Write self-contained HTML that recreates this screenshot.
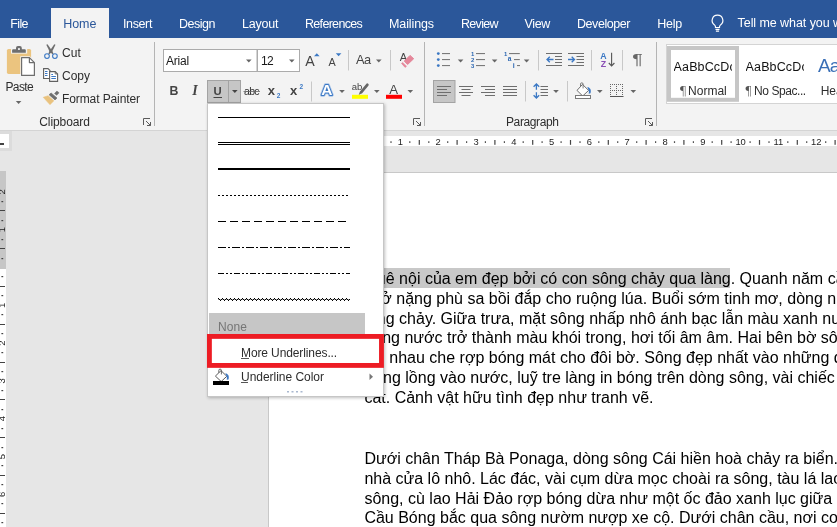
<!DOCTYPE html>
<html><head><meta charset="utf-8"><title>Word</title>
<style>
*{box-sizing:border-box;margin:0;padding:0}
html,body{width:837px;height:527px;overflow:hidden;background:#e6e6e6;font-family:"Liberation Sans",sans-serif;}
#app{position:relative;width:837px;height:527px;overflow:hidden;background:#e6e6e6;will-change:transform}
.abs{position:absolute}
svg{position:absolute;overflow:visible}
#tabbar{position:absolute;left:0;top:0;width:837px;height:38px;background:#2b579a}
#hometab{position:absolute;left:51px;top:8px;width:58px;height:30px;background:#f3f3f3}
#ribbon{position:absolute;left:0;top:38px;width:837px;height:93px;background:#f3f3f3;border-bottom:1px solid #d4d4d4}
.t{position:absolute;white-space:nowrap;line-height:16px;font-family:"Liberation Sans",sans-serif}
.vsep{position:absolute;width:1px;background:#c8c8c8}
.gsep{position:absolute;width:1px;background:#b4b4b4;top:42px;height:84px}
.dd{position:absolute;width:0;height:0;border-left:3px solid transparent;border-right:3px solid transparent;border-top:3px solid #555}
.doc{position:absolute;left:364.4px;font-size:16px;line-height:19.87px;color:#000;white-space:nowrap;font-family:"Liberation Sans",sans-serif}
.box{position:absolute;background:#fff;border:1px solid #ababab}
</style></head><body><div id="app">

<!-- TAB BAR -->
<div id="tabbar"><div id="hometab"></div>
<svg style="left:710px;top:14px" width="15" height="19" viewBox="0 0 15 19" fill="none" stroke="#fff" stroke-width="1.2"><path d="M7.5 1.2a5.3 5.3 0 0 0-3 9.7c.7.6 1 1.300 1 2.100v.5h4v-.5c0-.8.300-1.500 1-2.100a5.300 5.300 0 0 0-3-9.700z"/><path d="M5.500 15.300h4M5.900 17.200h3.200"/></svg>
</div>

<!-- RIBBON -->
<div id="ribbon"></div>
<div class="gsep" style="left:154px"></div>
<div class="gsep" style="left:424px"></div>
<div class="gsep" style="left:656px"></div>

<!-- DOCUMENT AREA -->
<div class="abs" style="left:0;top:131px;width:837px;height:396px;background:#e6e6e6"></div>
<!-- tab selector -->
<div class="abs" style="left:-4px;top:131px;width:16px;height:20px;background:#fff;border:3px solid #dcdcdc"></div>
<div class="abs" style="left:0;top:143px;width:4px;height:2px;background:#444"></div>
<!-- horizontal ruler -->
<div class="abs" style="left:268px;top:136px;width:95px;height:10px;background:#c6c6c6"></div>
<div class="abs" style="left:363px;top:136px;width:480px;height:10px;background:#fff"></div>
<svg style="left:0;top:0" width="837" height="527" viewBox="0 0 837 527" font-family="Liberation Sans, sans-serif"><rect x="277.0" y="141.2" width="1.2" height="1.8" fill="#555"/><text x="287.0" y="144.8" font-size="9.4" fill="#222" text-anchor="middle">2</text><rect x="295.8" y="141.2" width="1.2" height="1.8" fill="#555"/><rect x="305.3" y="140" width="1.2" height="4.8" fill="#444"/><rect x="314.8" y="141.2" width="1.2" height="1.8" fill="#555"/><text x="324.8" y="144.8" font-size="9.4" fill="#222" text-anchor="middle">1</text><rect x="333.6" y="141.2" width="1.2" height="1.8" fill="#555"/><rect x="343.1" y="140" width="1.2" height="4.8" fill="#444"/><rect x="352.6" y="141.2" width="1.2" height="1.8" fill="#555"/><rect x="371.4" y="141.2" width="1.2" height="1.8" fill="#555"/><rect x="380.9" y="140" width="1.2" height="4.8" fill="#444"/><rect x="390.4" y="141.2" width="1.2" height="1.8" fill="#555"/><text x="400.4" y="144.8" font-size="9.4" fill="#222" text-anchor="middle">1</text><rect x="409.2" y="141.2" width="1.2" height="1.8" fill="#555"/><rect x="418.7" y="140" width="1.2" height="4.8" fill="#444"/><rect x="428.2" y="141.2" width="1.2" height="1.8" fill="#555"/><text x="438.2" y="144.8" font-size="9.4" fill="#222" text-anchor="middle">2</text><rect x="447.1" y="141.2" width="1.2" height="1.8" fill="#555"/><rect x="456.5" y="140" width="1.2" height="4.8" fill="#444"/><rect x="466.0" y="141.2" width="1.2" height="1.8" fill="#555"/><text x="476.0" y="144.8" font-size="9.4" fill="#222" text-anchor="middle">3</text><rect x="484.8" y="141.2" width="1.2" height="1.8" fill="#555"/><rect x="494.3" y="140" width="1.2" height="4.8" fill="#444"/><rect x="503.8" y="141.2" width="1.2" height="1.8" fill="#555"/><text x="513.8" y="144.8" font-size="9.4" fill="#222" text-anchor="middle">4</text><rect x="522.6" y="141.2" width="1.2" height="1.8" fill="#555"/><rect x="532.1" y="140" width="1.2" height="4.8" fill="#444"/><rect x="541.5" y="141.2" width="1.2" height="1.8" fill="#555"/><text x="551.6" y="144.8" font-size="9.4" fill="#222" text-anchor="middle">5</text><rect x="560.5" y="141.2" width="1.2" height="1.8" fill="#555"/><rect x="569.9" y="140" width="1.2" height="4.8" fill="#444"/><rect x="579.4" y="141.2" width="1.2" height="1.8" fill="#555"/><text x="589.4" y="144.8" font-size="9.4" fill="#222" text-anchor="middle">6</text><rect x="598.2" y="141.2" width="1.2" height="1.8" fill="#555"/><rect x="607.7" y="140" width="1.2" height="4.8" fill="#444"/><rect x="617.1" y="141.2" width="1.2" height="1.8" fill="#555"/><text x="627.2" y="144.8" font-size="9.4" fill="#222" text-anchor="middle">7</text><rect x="636.1" y="141.2" width="1.2" height="1.8" fill="#555"/><rect x="645.5" y="140" width="1.2" height="4.8" fill="#444"/><rect x="655.0" y="141.2" width="1.2" height="1.8" fill="#555"/><text x="665.0" y="144.8" font-size="9.4" fill="#222" text-anchor="middle">8</text><rect x="673.9" y="141.2" width="1.2" height="1.8" fill="#555"/><rect x="683.3" y="140" width="1.2" height="4.8" fill="#444"/><rect x="692.8" y="141.2" width="1.2" height="1.8" fill="#555"/><text x="702.8" y="144.8" font-size="9.4" fill="#222" text-anchor="middle">9</text><rect x="711.6" y="141.2" width="1.2" height="1.8" fill="#555"/><rect x="721.1" y="140" width="1.2" height="4.8" fill="#444"/><rect x="730.5" y="141.2" width="1.2" height="1.8" fill="#555"/><text x="740.6" y="144.8" font-size="9.4" fill="#222" text-anchor="middle">10</text><rect x="749.5" y="141.2" width="1.2" height="1.8" fill="#555"/><rect x="758.9" y="140" width="1.2" height="4.8" fill="#444"/><rect x="768.4" y="141.2" width="1.2" height="1.8" fill="#555"/><text x="778.4" y="144.8" font-size="9.4" fill="#222" text-anchor="middle">11</text><rect x="787.2" y="141.2" width="1.2" height="1.8" fill="#555"/><rect x="796.7" y="140" width="1.2" height="4.8" fill="#444"/><rect x="806.1" y="141.2" width="1.2" height="1.8" fill="#555"/><text x="816.2" y="144.8" font-size="9.4" fill="#222" text-anchor="middle">12</text><rect x="825.1" y="141.2" width="1.2" height="1.8" fill="#555"/><rect x="834.5" y="140" width="1.2" height="4.8" fill="#444"/></svg>
<!-- vertical ruler -->
<div class="abs" style="left:0;top:171px;width:6px;height:98px;background:#c6c6c6"></div>
<div class="abs" style="left:0;top:269px;width:6px;height:260px;background:#fff"></div>
<svg style="left:0;top:0;overflow:hidden" width="6" height="527" viewBox="0 0 6 527" font-family="Liberation Sans, sans-serif"><text transform="translate(5.4,191.9) rotate(-90)" font-size="9.5" fill="#222" text-anchor="middle">2</text><rect x="1.4" y="201" width="1.8" height="1.2" fill="#444"/><rect x="0" y="210" width="5" height="1" fill="#444"/><rect x="1.4" y="220" width="1.8" height="1.2" fill="#444"/><text transform="translate(5.4,229.7) rotate(-90)" font-size="9.5" fill="#222" text-anchor="middle">1</text><rect x="1.4" y="239" width="1.8" height="1.2" fill="#444"/><rect x="0" y="248" width="5" height="1" fill="#444"/><rect x="1.4" y="258" width="1.8" height="1.2" fill="#444"/><rect x="1.4" y="276" width="1.8" height="1.2" fill="#444"/><rect x="0" y="286" width="5" height="1" fill="#444"/><rect x="1.4" y="295" width="1.8" height="1.2" fill="#444"/><text transform="translate(5.4,305.3) rotate(-90)" font-size="9.5" fill="#222" text-anchor="middle">1</text><rect x="1.4" y="314" width="1.8" height="1.2" fill="#444"/><rect x="0" y="324" width="5" height="1" fill="#444"/><rect x="1.4" y="333" width="1.8" height="1.2" fill="#444"/><text transform="translate(5.4,343.1) rotate(-90)" font-size="9.5" fill="#222" text-anchor="middle">2</text><rect x="1.4" y="352" width="1.8" height="1.2" fill="#444"/><rect x="0" y="362" width="5" height="1" fill="#444"/><rect x="1.4" y="371" width="1.8" height="1.2" fill="#444"/><text transform="translate(5.4,380.9) rotate(-90)" font-size="9.5" fill="#222" text-anchor="middle">3</text><rect x="1.4" y="390" width="1.8" height="1.2" fill="#444"/><rect x="0" y="399" width="5" height="1" fill="#444"/><rect x="1.4" y="409" width="1.8" height="1.2" fill="#444"/><text transform="translate(5.4,418.7) rotate(-90)" font-size="9.5" fill="#222" text-anchor="middle">4</text><rect x="1.4" y="428" width="1.8" height="1.2" fill="#444"/><rect x="0" y="437" width="5" height="1" fill="#444"/><rect x="1.4" y="447" width="1.8" height="1.2" fill="#444"/><text transform="translate(5.4,456.5) rotate(-90)" font-size="9.5" fill="#222" text-anchor="middle">5</text><rect x="1.4" y="465" width="1.8" height="1.2" fill="#444"/><rect x="0" y="475" width="5" height="1" fill="#444"/><rect x="1.4" y="484" width="1.8" height="1.2" fill="#444"/><text transform="translate(5.4,494.3) rotate(-90)" font-size="9.5" fill="#222" text-anchor="middle">6</text><rect x="1.4" y="503" width="1.8" height="1.2" fill="#444"/><rect x="0" y="513" width="5" height="1" fill="#444"/><rect x="1.4" y="522" width="1.8" height="1.2" fill="#444"/></svg>
<!-- page -->
<div class="abs" style="left:268px;top:172px;width:600px;height:400px;background:#fff;border-left:1px solid #c8c8c8;border-top:1px solid #c8c8c8"></div>
<div class="abs" style="left:364px;top:268px;width:366px;height:20px;background:#c8c8c8"></div>
<div class="doc" style="top:269.00px">Quê nội của em đẹp bởi có con sông chảy qua làng. Quanh năm cần mẫn, dòng sông</div>
<div class="doc" style="top:288.67px">chở nặng phù sa bồi đắp cho ruộng lúa. Buổi sớm tinh mơ, dòng nước mờ mờ phẳng</div>
<div class="doc" style="top:308.54px">lặng chảy. Giữa trưa, mặt sông nhấp nhô ánh bạc lẫn màu xanh nước biếc. Chiều tà,</div>
<div class="doc" style="top:328.31px">dòng nước trở thành màu khói trong, hơi tối âm âm. Hai bên bờ sông, luỹ tre làng nối</div>
<div class="doc" style="top:348.48px">vai nhau che rợp bóng mát cho đôi bờ. Sông đẹp nhất vào những đêm trăng sáng. Mặt</div>
<div class="doc" style="top:368.35px">trăng lồng vào nước, luỹ tre làng in bóng trên dòng sông, vài chiếc thuyền neo trên bến</div>
<div class="doc" style="top:388.22px">cát. Cảnh vật hữu tình đẹp như tranh vẽ.</div>
<div class="doc" style="top:449.40px">Dưới chân Tháp Bà Ponaga, dòng sông Cái hiền hoà chảy ra biển. Hai bên bờ sông,</div>
<div class="doc" style="top:468.77px">nhà cửa lô nhô. Lác đác, vài cụm dừa mọc choài ra sông, tàu lá lao xao trong gió. Giữa</div>
<div class="doc" style="top:489.30px">sông, cù lao Hải Đảo rợp bóng dừa như một ốc đảo xanh lục giữa dòng nước trong xanh.</div>
<div class="doc" style="top:507.91px">Cầu Bóng bắc qua sông nườm nượp xe cộ. Dưới chân cầu, nơi con nước đổ ra biển</div>

<svg style="left:0;top:0" width="837" height="527" viewBox="0 0 837 527" font-family="Liberation Sans, sans-serif">
<!-- Paste -->
<rect x="6.900" y="48.900" width="24.200" height="25" rx="1.600" fill="#ebc47f"/>
<rect x="11" y="48" width="16.200" height="5.600" fill="#f3f3f3"/>
<path d="M12.100 52.800v-2.600a1 1 0 0 1 1-1h2.900v-1.200a1.900 1.900 0 0 1 1.900-1.900h2a1.900 1.900 0 0 1 1.900 1.900v1.200h3a1 1 0 0 1 1 1v2.600z" fill="#6e6e6e"/>
<rect x="18" y="48" width="1.900" height="2" rx=".4" fill="#f3f3f3"/>
<path d="M20.300 56.300h9.500l6 6v14.500h-15.500z" fill="#f3f3f3"/>
<path d="M21.600 57.600h7.800l5 5v12.800h-12.800z" fill="#fff" stroke="#6e6e6e" stroke-width="1.200" stroke-linejoin="round"/>
<path d="M29.400 57.600v5h5" fill="none" stroke="#6e6e6e" stroke-width="1.200" stroke-linejoin="round"/>
<path d="M15.800 101h5.600l-2.800 3z" fill="#666"/>
<!-- Cut -->
<path d="M46.300 44.700L47.500 44.300L52.400 51.300L53.500 53.800L52.500 54.200L49.700 51.700z" fill="#6e6e6e"/>
<path d="M55.500 44.700L54.300 44.300L49.400 51.300L48.300 53.800L49.300 54.200L52.100 51.700z" fill="#6e6e6e"/>
<circle cx="47" cy="56.100" r="2.350" fill="none" stroke="#3b78c4" stroke-width="1.050"/>
<circle cx="54.900" cy="56.100" r="2.350" fill="none" stroke="#3b78c4" stroke-width="1.050"/>
<!-- Copy -->
<path d="M43.600 68.600h4.400l2 2v7.900h-6.400z" fill="#fff" stroke="#606060" stroke-width="1.100"/>
<path d="M45 71.500h2.500M45 73.500h2.500M45 75.500h2.500" stroke="#3b78c4" stroke-width="1"/>
<path d="M49.600 71.600h5.600l2.400 2.400v7.400h-8z" fill="#fff" stroke="#606060" stroke-width="1.100"/>
<path d="M55.200 71.600v2.400h2.400" fill="none" stroke="#606060" stroke-width=".8"/>
<path d="M51.300 74.500h1.700M51.300 76.500h4.600M51.300 78.500h4.600" stroke="#3b78c4" stroke-width="1"/>
<!-- Format painter -->
<path d="M43.200 97.300L48.100 95.700L53.900 100.800L50 104.700z" fill="#e9c27e" stroke="#e9c27e" stroke-width=".5" stroke-linejoin="round"/>
<path d="M51.100 93L57 98.100L55 99.900L49.100 94.700z" fill="#6e6e6e" stroke="#6e6e6e" stroke-width=".7" stroke-linejoin="round"/>
<path d="M56.900 91L59.100 92.800L56.700 95.300L54.500 93.500z" fill="#6e6e6e" stroke="#6e6e6e" stroke-width=".5" stroke-linejoin="round"/>
<!-- launchers -->
<g fill="none" stroke="#5a5a5a" stroke-width="1">
<path d="M143.500 125v-6.500h6.500M146 121l4.500 4.500M150.500 122v3.500h-3.500"/>
<path d="M413.500 125v-6.500h6.500M416 121l4.500 4.500M420.500 122v3.500h-3.500"/>
<path d="M645.500 125v-6.500h6.500M648 121l4.500 4.500M652.500 122v3.500h-3.500"/>
</g>
<!-- Font boxes -->
<rect x="163.500" y="49.500" width="93.500" height="22" fill="#fff" stroke="#ababab"/>
<rect x="257.500" y="49.500" width="42" height="22" fill="#fff" stroke="#ababab"/>
<path d="M246 59.500h5.600l-2.800 3zM289 59.500h5.600l-2.800 3z" fill="#666"/>
<!-- grow/shrink -->
<text x="305.300" y="66" font-size="14.200" fill="#444">A</text>
<path d="M314 56.300l2.800-3 2.800 3z" fill="#3b78c4"/>
<text x="328.600" y="66" font-size="10.800" fill="#444">A</text>
<path d="M335.800 53.300h5.600l-2.800 3z" fill="#3b78c4"/>
<path d="M348.500 50v20.500M390.500 50v20.500M311.500 81.500v20M538.500 50v20.500M591.500 50v20.500M622.500 50v20.500M525.500 81v20.500M567.500 81v20.500" stroke="#c8c8c8" stroke-width="1"/>
<text x="356" y="63.800" font-size="12.800" fill="#444" textLength="15">Aa</text>
<path d="M376 59.500h5.600l-2.800 3z" fill="#666"/>
<!-- clear formatting -->
<text x="399.700" y="60.800" font-size="11" fill="#444">A</text>
<path d="M410 55.400L413.700 58.700L407.600 64.500L404.300 61.100z" fill="#e5879a" stroke="#e5879a" stroke-width="1" stroke-linejoin="round"/>
<path d="M402.600 62.400L406.500 66.200L405.100 67.400L401.500 63.400z" fill="#e5879a" stroke="#e5879a" stroke-width=".6" stroke-linejoin="round"/>
<!-- B I U -->
<text x="169.500" y="95" font-size="12.300" font-weight="bold" fill="#444">B</text>
<text x="192.300" y="95" font-size="14" font-style="italic" font-weight="bold" font-family="Liberation Serif, serif" fill="#444">I</text>
<rect x="207.500" y="80.500" width="21" height="22" fill="#c6c6c6" stroke="#a3a3a3"/>
<rect x="228.500" y="80.500" width="12" height="22" fill="#c6c6c6" stroke="#a3a3a3"/>
<text x="213.600" y="94.600" font-size="11.300" font-weight="bold" fill="#444">U</text>
<path d="M213.500 97.500h8.500" stroke="#444" stroke-width="1"/>
<path d="M232 90h5.600l-2.800 3z" fill="#444"/>
<text x="244" y="95" font-size="10.500" fill="#333" textLength="15.500">abc</text>
<path d="M243.500 91.500h16.500" stroke="#666" stroke-width=".8"/>
<text x="267.700" y="95.200" font-size="13" font-weight="bold" fill="#444">x</text>
<text x="276.800" y="98" font-size="6.500" font-weight="bold" fill="#3b78c4">2</text>
<text x="290" y="95.200" font-size="13" font-weight="bold" fill="#444">x</text>
<text x="299.500" y="89" font-size="6.500" font-weight="bold" fill="#3b78c4">2</text>
<!-- text effects A -->
<text x="321.200" y="95.300" font-size="15.500" font-weight="bold" fill="#fff" stroke="#a9c4e8" stroke-width="3.400" paint-order="stroke" stroke-linejoin="round">A</text><text x="321.200" y="95.300" font-size="15.500" font-weight="bold" fill="#fff" stroke="#3b78c4" stroke-width="1.900" paint-order="stroke" stroke-linejoin="round">A</text>
<path d="M339.200 90h5.600l-2.800 3z" fill="#666"/>
<!-- highlight -->
<text x="351.800" y="90" font-size="9.500" fill="#444" textLength="10.500">ab</text>
<path d="M367.300 84.800l-5.800 7" stroke="#666" stroke-width="2.800" stroke-linecap="round"/>
<path d="M362.300 93l-3.600 1.900 1.400-3.800z" fill="#666"/>
<rect x="352" y="94.800" width="16" height="4" fill="#ffff00"/>
<path d="M374 90h5.600l-2.800 3z" fill="#666"/>
<!-- font colour -->
<text x="389.300" y="94.300" font-size="13.200" fill="#444">A</text>
<rect x="386" y="94.800" width="16" height="4" fill="#ff0000"/>
<path d="M407.500 90h5.600l-2.800 3z" fill="#666"/>
<!-- bullets -->
<g fill="#3b78c4"><circle cx="438.300" cy="53.600" r="1.400"/><circle cx="438.300" cy="59.600" r="1.400"/><circle cx="438.300" cy="65.600" r="1.400"/></g>
<path d="M442 53.600h8M442 59.600h8M442 65.600h8" stroke="#6e6e6e" stroke-width="1"/>
<path d="M457.800 59.500h5.600l-2.800 3z" fill="#666"/>
<!-- numbering -->
<g font-size="5.900" font-weight="bold" fill="#2b66b1"><text x="470.900" y="55.800">1</text><text x="470.900" y="61.800">2</text><text x="470.900" y="67.800">3</text></g>
<path d="M476 53.600h9M476 59.600h9M476 65.600h9" stroke="#6e6e6e" stroke-width="1"/>
<path d="M491.800 59.500h5.600l-2.800 3z" fill="#666"/>
<!-- multilevel -->
<g font-size="5.900" font-weight="bold" fill="#2b66b1"><text x="504" y="55.800">1</text><text x="507.800" y="61.100" font-size="6.600">a</text><text x="512.800" y="67.900" font-size="7">i</text></g>
<path d="M509 53.600h10.800M514 59.600h5.800M517 65.600h3" stroke="#6e6e6e" stroke-width="1"/>
<path d="M523.800 59.500h5.600l-2.800 3z" fill="#666"/>
<!-- dec indent -->
<path d="M546 53.500h16M555 56.500h7M555 59.500h7M555 62.500h7M546 65.500h16" stroke="#6e6e6e" stroke-width="1"/>
<path d="M553.500 59.500h-6.500M549.800 56.700l-2.800 2.800 2.800 2.800" stroke="#3b78c4" stroke-width="1.300" fill="none"/>
<!-- inc indent -->
<path d="M568 53.500h16M576.500 56.500h7.500M576.500 59.500h7.500M576.500 62.500h7.500M568 65.500h16" stroke="#6e6e6e" stroke-width="1"/>
<path d="M568 59.500h6.500M571.700 56.700l2.800 2.800-2.800 2.800" stroke="#3b78c4" stroke-width="1.300" fill="none"/>
<!-- sort -->
<text x="600.300" y="59.200" font-size="8.800" font-weight="bold" fill="#3b78c4">A</text>
<text x="600.700" y="66.700" font-size="8.800" font-weight="bold" fill="#8a4fb5">Z</text>
<path d="M611.600 52.800v13M608.800 63l2.800 3 2.800-3" stroke="#555" stroke-width="1.100" fill="none"/>
<!-- pilcrow -->
<text x="632.300" y="63.600" font-size="15.500" fill="#666" textLength="10.500" lengthAdjust="spacingAndGlyphs">¶</text>
<!-- align -->
<rect x="433.500" y="80.500" width="21.500" height="22" fill="#c6c6c6" stroke="#a3a3a3"/>
<path d="M437 86.500h14M437 89.500h10M437 92.500h14M437 95.500h10" stroke="#6e6e6e" stroke-width="1"/>
<path d="M459 86.500h14M461.500 89.500h9M459 92.500h14M461.500 95.500h9" stroke="#6e6e6e" stroke-width="1"/>
<path d="M481 86.500h14M485 89.500h10M481 92.500h14M485 95.500h10" stroke="#6e6e6e" stroke-width="1"/>
<path d="M503 86.500h14M503 89.500h14M503 92.500h14M503 95.500h14" stroke="#6e6e6e" stroke-width="1"/>
<!-- line spacing -->
<path d="M536.400 84v5.800M536.400 92.200v5.800M533.600 86.800l2.800-2.800 2.800 2.800M533.600 95.200l2.800 2.800 2.800-2.800" stroke="#3b78c4" stroke-width="1.300" fill="none"/>
<path d="M540.500 86.500h7.500M540.500 89.500h7.500M540.500 92.500h7.500M540.500 95.500h7.500" stroke="#6e6e6e" stroke-width="1"/>
<path d="M553.200 90h5.600l-2.800 3z" fill="#666"/>
<!-- shading -->
<path d="M582.500 84.400l6.100 6-5.900 5.600-5.700-5.600z" fill="#fff" stroke="#6e6e6e" stroke-width="1"/>
<path d="M580.500 86.500v-2.400a1.300 1.300 0 0 1 2.600 0v4.300" fill="none" stroke="#6e6e6e" stroke-width="0.900"/>
<path d="M587.300 87c3 .6 4.200 3 3.200 6.200l-1.800.6c.4-1.800.3-3.200-.4-4.400z" fill="#3b78c4"/>
<rect x="575.500" y="95.500" width="15" height="3" fill="#fff" stroke="#7a7a7a" stroke-width="1"/>
<path d="M597 90h5.600l-2.800 3z" fill="#666"/>
<!-- borders -->
<path d="M610 84.500h13M610 90.500h13M610.500 84v12M616.500 84v12M622.500 84v12" stroke="#666" stroke-width="1" stroke-dasharray="1 1" fill="none" shape-rendering="crispEdges"/>
<path d="M610 96.500h13.500" stroke="#555" stroke-width="1"/>
<path d="M630.500 90h5.600l-2.800 3z" fill="#666"/>
<!-- styles gallery -->
<rect x="666.500" y="44.500" width="180" height="59" fill="#fff" stroke="#d4d4d4"/>
<rect x="669" y="48" width="68" height="51.800" fill="#fff" stroke="#c6c6c6" stroke-width="4"/>
</svg>


<!-- DROPDOWN -->
<div class="abs" id="menu" style="left:207px;top:103px;width:176.500px;height:294px;background:#fff;border:1px solid #c6c6c6;box-shadow:1px 1px 3px rgba(0,0,0,.25)"></div>
<svg style="left:0;top:0" width="837" height="527" viewBox="0 0 837 527">
<defs><pattern id="wv" x="218" y="298" width="4" height="3" patternUnits="userSpaceOnUse"><rect x="0" y="0" width="1" height="1" fill="#000"/><rect x="1" y="1" width="1" height="1" fill="#000"/><rect x="2" y="2" width="1" height="1" fill="#000"/><rect x="3" y="1" width="1" height="1" fill="#000"/><rect x="0" y="1" width="1" height="1" fill="#000" opacity=".35"/><rect x="2" y="1" width="1" height="1" fill="#000" opacity=".35"/></pattern></defs>
<rect x="218" y="298" width="132" height="3" fill="url(#wv)"/>
<g stroke="#000" fill="none">
<path d="M218 117.500h132" stroke-width="1"/>
<path d="M218 142.500h132M218 144.500h132" stroke-width="1"/>
<path d="M218 169h132" stroke-width="2"/>
<path d="M218 195.500h130" stroke-width="1" stroke-dasharray="2 2"/>
<path d="M218 221.500h130" stroke-width="1.200" stroke-dasharray="8 4"/>
<path d="M218 247.500h132" stroke-width="1.200" stroke-dasharray="8 2 2 2"/>
<path d="M218 273.500h132" stroke-width="1.200" stroke-dasharray="6 2 2 2 2 2"/>

</g>
<rect x="209" y="313" width="156" height="21" fill="#c6c6c6"/>
<!-- underline color icon -->
<path d="M221 370.600l5.800 5.700-5.600 5.200-5.800-5.400z" fill="#fff" stroke="#5a5a5a" stroke-width="1"/>
<path d="M218.800 372.800v-2.400a1.300 1.300 0 0 1 2.600 0v4" fill="none" stroke="#5a5a5a" stroke-width="0.900"/>
<path d="M225.300 373.200c3 .6 4.200 3 3.200 6.200l-1.800.4c.4-1.800.3-3-.4-4.200z" fill="#3b78c4"/>
<rect x="213" y="381" width="16" height="4" fill="#000"/>
<path d="M369.500 373.500l3.500 3.200-3.500 3.200z" fill="#777"/>
<g fill="#a9b8cf"><rect x="287" y="391" width="2" height="1.500"/><rect x="291.500" y="391" width="2" height="1.500"/><rect x="296" y="391" width="2" height="1.500"/><rect x="300.500" y="391" width="2" height="1.500"/></g>
<path d="M241 358.500h8M241 382.500h7" stroke="#555" stroke-width="1"/>
<rect x="209.420" y="336.420" width="172.050" height="29" fill="none" stroke="#ed1c24" stroke-width="4.850"/>
</svg>


<span class="t" style="left:10.3px;top:15.5px;font-size:12.5px;color:#fff;letter-spacing:-0.66px;font-weight:400;font-family:'Liberation Sans',sans-serif;">File</span>
<span class="t" style="left:63.2px;top:15.5px;font-size:12.5px;color:#2b579a;letter-spacing:-0.06px;font-weight:400;font-family:'Liberation Sans',sans-serif;">Home</span>
<span class="t" style="left:123.0px;top:15.5px;font-size:12.5px;color:#fff;letter-spacing:-0.38px;font-weight:400;font-family:'Liberation Sans',sans-serif;">Insert</span>
<span class="t" style="left:179.0px;top:15.5px;font-size:12.5px;color:#fff;letter-spacing:-0.49px;font-weight:400;font-family:'Liberation Sans',sans-serif;">Design</span>
<span class="t" style="left:242.0px;top:15.5px;font-size:12.5px;color:#fff;letter-spacing:-0.19px;font-weight:400;font-family:'Liberation Sans',sans-serif;">Layout</span>
<span class="t" style="left:305.0px;top:15.5px;font-size:12.5px;color:#fff;letter-spacing:-0.69px;font-weight:400;font-family:'Liberation Sans',sans-serif;">References</span>
<span class="t" style="left:389.0px;top:15.5px;font-size:12.5px;color:#fff;letter-spacing:-0.11px;font-weight:400;font-family:'Liberation Sans',sans-serif;">Mailings</span>
<span class="t" style="left:461.0px;top:15.5px;font-size:12.5px;color:#fff;letter-spacing:-0.70px;font-weight:400;font-family:'Liberation Sans',sans-serif;">Review</span>
<span class="t" style="left:524.6px;top:15.5px;font-size:12.5px;color:#fff;letter-spacing:-0.37px;font-weight:400;font-family:'Liberation Sans',sans-serif;">View</span>
<span class="t" style="left:577.0px;top:15.5px;font-size:12.5px;color:#fff;letter-spacing:-0.44px;font-weight:400;font-family:'Liberation Sans',sans-serif;">Developer</span>
<span class="t" style="left:657.3px;top:15.5px;font-size:12.5px;color:#fff;letter-spacing:-0.25px;font-weight:400;font-family:'Liberation Sans',sans-serif;">Help</span>
<span class="t" style="left:737.6px;top:14.9px;font-size:12.5px;color:#fff;letter-spacing:-0.07px;font-weight:400;font-family:'Liberation Sans',sans-serif;">Tell me what you w</span>
<span class="t" style="left:5.5px;top:79.0px;font-size:12px;color:#2d2d2d;letter-spacing:-0.64px;font-weight:400;font-family:'Liberation Sans',sans-serif;">Paste</span>
<span class="t" style="left:62.0px;top:44.5px;font-size:12px;color:#2d2d2d;letter-spacing:0.10px;font-weight:400;font-family:'Liberation Sans',sans-serif;">Cut</span>
<span class="t" style="left:62.0px;top:67.5px;font-size:12px;color:#2d2d2d;letter-spacing:-0.00px;font-weight:400;font-family:'Liberation Sans',sans-serif;">Copy</span>
<span class="t" style="left:62.0px;top:90.5px;font-size:12px;color:#2d2d2d;letter-spacing:-0.10px;font-weight:400;font-family:'Liberation Sans',sans-serif;">Format Painter</span>
<span class="t" style="left:39.3px;top:114.0px;font-size:12px;color:#2d2d2d;letter-spacing:-0.10px;font-weight:400;font-family:'Liberation Sans',sans-serif;">Clipboard</span>
<span class="t" style="left:506.0px;top:114.0px;font-size:12px;color:#2d2d2d;letter-spacing:-0.39px;font-weight:400;font-family:'Liberation Sans',sans-serif;">Paragraph</span>
<span class="t" style="left:166.0px;top:53.0px;font-size:12px;color:#1a1a1a;letter-spacing:-0.20px;font-weight:400;font-family:'Liberation Sans',sans-serif;">Arial</span>
<span class="t" style="left:261.0px;top:53.0px;font-size:12px;color:#1a1a1a;letter-spacing:-0.68px;font-weight:400;font-family:'Liberation Sans',sans-serif;">12</span>
<span class="t" style="left:673.6px;top:59.0px;font-size:12.5px;color:#111;letter-spacing:0.13px;font-weight:400;font-family:'Liberation Sans',sans-serif;width:58.2px;overflow:hidden;display:block;">AaBbCcDc</span>
<span class="t" style="left:745.6px;top:59.0px;font-size:12.5px;color:#111;letter-spacing:0.13px;font-weight:400;font-family:'Liberation Sans',sans-serif;width:58.3px;overflow:hidden;display:block;">AaBbCcDc</span>
<span class="t" style="left:679.0px;top:82.5px;font-size:12.5px;color:#555;letter-spacing:-2.55px;font-weight:200;font-family:'DejaVu Sans Light','DejaVu Sans',sans-serif;">¶</span>
<span class="t" style="left:688.1px;top:83.0px;font-size:12px;color:#2d2d2d;letter-spacing:0.00px;font-weight:400;font-family:'Liberation Sans',sans-serif;">Normal</span>
<span class="t" style="left:744.6px;top:82.5px;font-size:12.5px;color:#555;letter-spacing:-2.55px;font-weight:200;font-family:'DejaVu Sans Light','DejaVu Sans',sans-serif;">¶</span>
<span class="t" style="left:754.1px;top:83.0px;font-size:12px;color:#2d2d2d;letter-spacing:-0.44px;font-weight:400;font-family:'Liberation Sans',sans-serif;">No Spac...</span>
<span class="t" style="left:818.1px;top:58.0px;font-size:19px;color:#3a6fb7;letter-spacing:-1.01px;font-weight:400;font-family:'Liberation Sans',sans-serif;">AaB</span>
<span class="t" style="left:820.7px;top:83.0px;font-size:12px;color:#2d2d2d;letter-spacing:-0.06px;font-weight:400;font-family:'Liberation Sans',sans-serif;">Heading</span>
<span class="t" style="left:218.0px;top:319.0px;font-size:12px;color:#767676;letter-spacing:0.08px;font-weight:400;font-family:'Liberation Sans',sans-serif;">None</span>
<span class="t" style="left:241.0px;top:344.8px;font-size:12px;color:#2d2d2d;letter-spacing:-0.11px;font-weight:400;font-family:'Liberation Sans',sans-serif;">More Underlines...</span>
<span class="t" style="left:241.0px;top:368.8px;font-size:12px;color:#2d2d2d;letter-spacing:-0.03px;font-weight:400;font-family:'Liberation Sans',sans-serif;">Underline Color</span>

</div></body></html>
